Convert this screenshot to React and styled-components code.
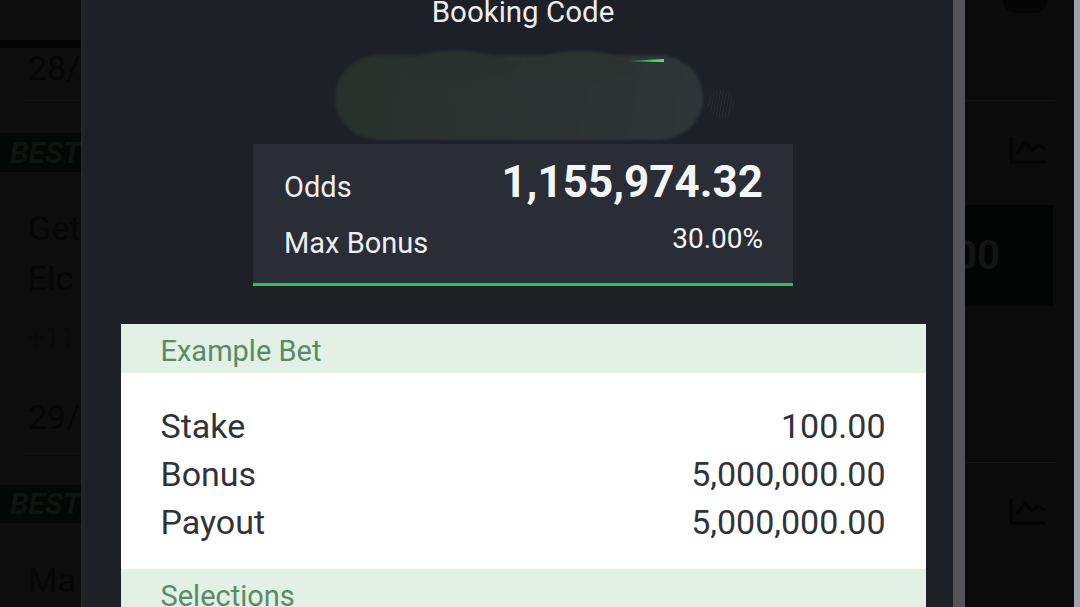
import React from 'react';
import styled, { createGlobalStyle } from 'styled-components';

const GlobalStyle = createGlobalStyle`
    html, body {
        margin: 0;
        padding: 0;
        background: #0d0d0e;
        font-family: Roboto, "Noto Sans", Arial, sans-serif;
    }
`;

const Screen = styled.div`
    display: flex;
    width: 1080px;
    height: 607px;
    overflow: hidden;
    background: #0d0d0e;
`;

/* ---------- dimmed page behind the sheet ---------- */

const LeftPeek = styled.div`
    width: 81px;
    flex-shrink: 0;
    display: flex;
    flex-direction: column;
    overflow: hidden;
    background: #0d0d0e;
`;

const RightPeek = styled.div`
    width: 109px;
    flex-shrink: 0;
    display: flex;
    flex-direction: column;
    overflow: hidden;
    background: #0b0b0b;
`;

const EdgeStrip = styled.div`
    width: 6px;
    flex-shrink: 0;
    background: #a0a3b0;
`;

const DarkBand = styled.div`
    height: ${({ h }) => h}px;
    margin-top: ${({ top }) => top || 0}px;
    background: #050505;
    flex-shrink: 0;
`;

const PeekText = styled.div`
    flex-shrink: 0;
    margin-top: ${({ top }) => top || 0}px;
    padding-left: ${({ left }) => left ?? 28}px;
    height: ${({ h }) => h || 50}px;
    line-height: ${({ h }) => h || 50}px;
    font-size: ${({ size }) => size || 34}px;
    color: ${({ color }) => color || '#060606'};
    white-space: nowrap;
`;

const PeekRule = styled.div`
    flex-shrink: 0;
    height: 1px;
    margin-top: ${({ top }) => top || 0}px;
    margin-left: ${({ left }) => left || 0}px;
    margin-right: ${({ right }) => right || 0}px;
    background: #151515;
`;

const BestBand = styled.div`
    flex-shrink: 0;
    height: ${({ h }) => h || 39}px;
    margin-top: ${({ top }) => top || 0}px;
    padding-left: 10px;
    background: #030705;
    color: #0f1411;
    font-size: 30px;
    font-weight: 700;
    font-style: italic;
    line-height: ${({ h }) => h || 39}px;
    white-space: nowrap;
`;

const TopDot = styled.div`
    flex-shrink: 0;
    width: 44px;
    height: 13px;
    margin-left: 38px;
    border-radius: 0 0 22px 22px;
    background: #050505;
`;

const ChartIconWrap = styled.div`
    flex-shrink: 0;
    margin-top: ${({ top }) => top}px;
    margin-left: 43px;
    width: 40px;
    height: 30px;
    color: #040404;
`;

const GreenBox = styled.div`
    flex-shrink: 0;
    margin-top: ${({ top }) => top}px;
    width: 88px;
    height: 101px;
    background: #010503;
    color: #141414;
    font-size: 40px;
    font-weight: 700;
    line-height: 101px;
    text-indent: -11px;
    white-space: nowrap;
    overflow: hidden;
`;

const ChartIcon = () => (
    <svg width="40" height="30" viewBox="0 0 40 30" fill="none" stroke="currentColor" strokeWidth="3" strokeLinejoin="round">
        <path d="M3 2v25h35" />
        <path d="M9 18l8-11 7 8 6-5 7 4" />
    </svg>
);

/* ---------- the sheet ---------- */

const Sheet = styled.div`
    position: relative;
    width: 884px;
    flex-shrink: 0;
    box-sizing: border-box;
    border-left: 3px solid #22252c;
    padding-right: 3px;
    background: #1d2027;
    display: flex;
    flex-direction: column;
    align-items: center;
    overflow: hidden;

    & > * {
        flex-shrink: 0;
    }
`;

const ScrollStrip = styled.div`
    position: absolute;
    top: 0;
    right: 0;
    width: 12px;
    height: 100%;
    background: #545458;
`;

const Title = styled.div`
    margin-top: -3px;
    height: 30px;
    line-height: 30px;
    font-size: 29.5px;
    color: #ecedef;
`;

const CodeArea = styled.div`
    position: relative;
    width: 400px;
    height: 117px;
    display: flex;
    align-items: flex-end;
    padding-bottom: 4px;
    box-sizing: border-box;
    margin-right: 8px;
`;

const Smudge = styled.div`
    position: relative;
    width: 368px;
    height: 85px;
    margin-left: 16px;
    border-radius: 44px / 42px;
    background: linear-gradient(100deg, #28302c 0%, #2b3230 45%, #303538 100%);
    filter: blur(1.5px);

    &::before, &::after {
        content: '';
        position: absolute;
        top: -4px;
        height: 30px;
        border-radius: 50%;
        background: #29302d;
    }
    &::before { left: 60px; width: 120px; }
    &::after { left: 190px; width: 110px; background: #2b3230; }
`;

const GreenStreak = styled.div`
    position: absolute;
    left: 309px;
    top: 32px;
    width: 36px;
    height: 3px;
    background: linear-gradient(90deg, rgba(63, 220, 95, 0) 0%, #3fdc5f 70%, #4be86a 100%);
    clip-path: polygon(0 60%, 100% 0, 100% 100%, 0 80%);
`;

const Hatch = styled.div`
    position: absolute;
    left: 389px;
    top: 63px;
    width: 26px;
    height: 28px;
    opacity: 0.3;
    background: repeating-linear-gradient(100deg, #3a3f44 0 1px, transparent 1px 3px);
    border-radius: 50%;
`;

const OddsBox = styled.div`
    width: 540px;
    box-sizing: border-box;
    padding: 12px 30px 19px 31px;
    background: #2a2d35;
    border-bottom: 3px solid #2ec15a;
    display: flex;
    flex-direction: column;
`;

const OddsRow = styled.div`
    display: flex;
    justify-content: space-between;
    align-items: baseline;
    margin-top: ${({ top }) => top || 0}px;
`;

const OddsLabel = styled.span`
    font-size: 29px;
    line-height: ${({ lh }) => lh}px;
    color: #eceef0;
`;

const OddsValue = styled.span`
    font-size: ${({ big }) => (big ? 44 : 28)}px;
    font-weight: ${({ big }) => (big ? 700 : 400)};
    line-height: ${({ lh }) => lh}px;
    color: #f4f5f6;
    position: relative;
    top: ${({ lift }) => (lift ? -5 : 0)}px;
`;

const BetCard = styled.div`
    margin-top: 38px;
    width: 805px;
    background: #ffffff;
    display: flex;
    flex-direction: column;
`;

const SectionHead = styled.div`
    height: 49px;
    box-sizing: border-box;
    padding: 5px 40px 0;
    background: #e2f0e5;
    color: #5b8b66;
    font-size: 29px;
    line-height: 44px;
`;

const BetBody = styled.div`
    padding: 29px 40px 23px;
    display: flex;
    flex-direction: column;
`;

const BetRow = styled.div`
    display: flex;
    justify-content: space-between;
    height: 48px;
    line-height: 48px;
    font-size: 34px;
    color: #30333a;
`;

const bets = [
    ['Stake', '100.00'],
    ['Bonus', '5,000,000.00'],
    ['Payout', '5,000,000.00'],
];

const App = () => {
    return (
        <>
            <GlobalStyle />
            <Screen>
                <LeftPeek>
                    <DarkBand top={40} h={8} />
                    <PeekText h={40}>28/</PeekText>
                    <PeekRule top={12} left={25} />
                    <BestBand top={32}>BEST</BestBand>
                    <PeekText top={31}>Get</PeekText>
                    <PeekText>Elc</PeekText>
                    <PeekText top={15} h={40} size={28} color="#0a0a0a">+11</PeekText>
                    <PeekText top={34} h={50}>29/</PeekText>
                    <PeekRule top={11} left={25} />
                    <BestBand top={31} h={38}>BEST</BestBand>
                    <PeekText top={32}>Ma</PeekText>
                </LeftPeek>

                <Sheet>
                    <Title>Booking Code</Title>
                    <CodeArea>
                        <Smudge />
                        <GreenStreak />
                        <Hatch />
                    </CodeArea>
                    <OddsBox>
                        <OddsRow>
                            <OddsLabel lh={52}>Odds</OddsLabel>
                            <OddsValue big lh={52}>1,155,974.32</OddsValue>
                        </OddsRow>
                        <OddsRow top={10}>
                            <OddsLabel lh={40}>Max Bonus</OddsLabel>
                            <OddsValue lh={40} lift>30.00%</OddsValue>
                        </OddsRow>
                    </OddsBox>
                    <BetCard>
                        <SectionHead>Example Bet</SectionHead>
                        <BetBody>
                            {bets.map(([label, value]) => (
                                <BetRow key={label}>
                                    <span>{label}</span>
                                    <span>{value}</span>
                                </BetRow>
                            ))}
                        </BetBody>
                        <SectionHead>Selections</SectionHead>
                    </BetCard>
                    <ScrollStrip />
                </Sheet>

                <RightPeek>
                    <TopDot />
                    <PeekRule top={87} right={19} />
                    <ChartIconWrap top={34}><ChartIcon /></ChartIconWrap>
                    <GreenBox top={40}>00</GreenBox>
                    <PeekRule top={156} right={19} />
                    <ChartIconWrap top={33}><ChartIcon /></ChartIconWrap>
                </RightPeek>
                <EdgeStrip />
            </Screen>
        </>
    );
};

export default App;
